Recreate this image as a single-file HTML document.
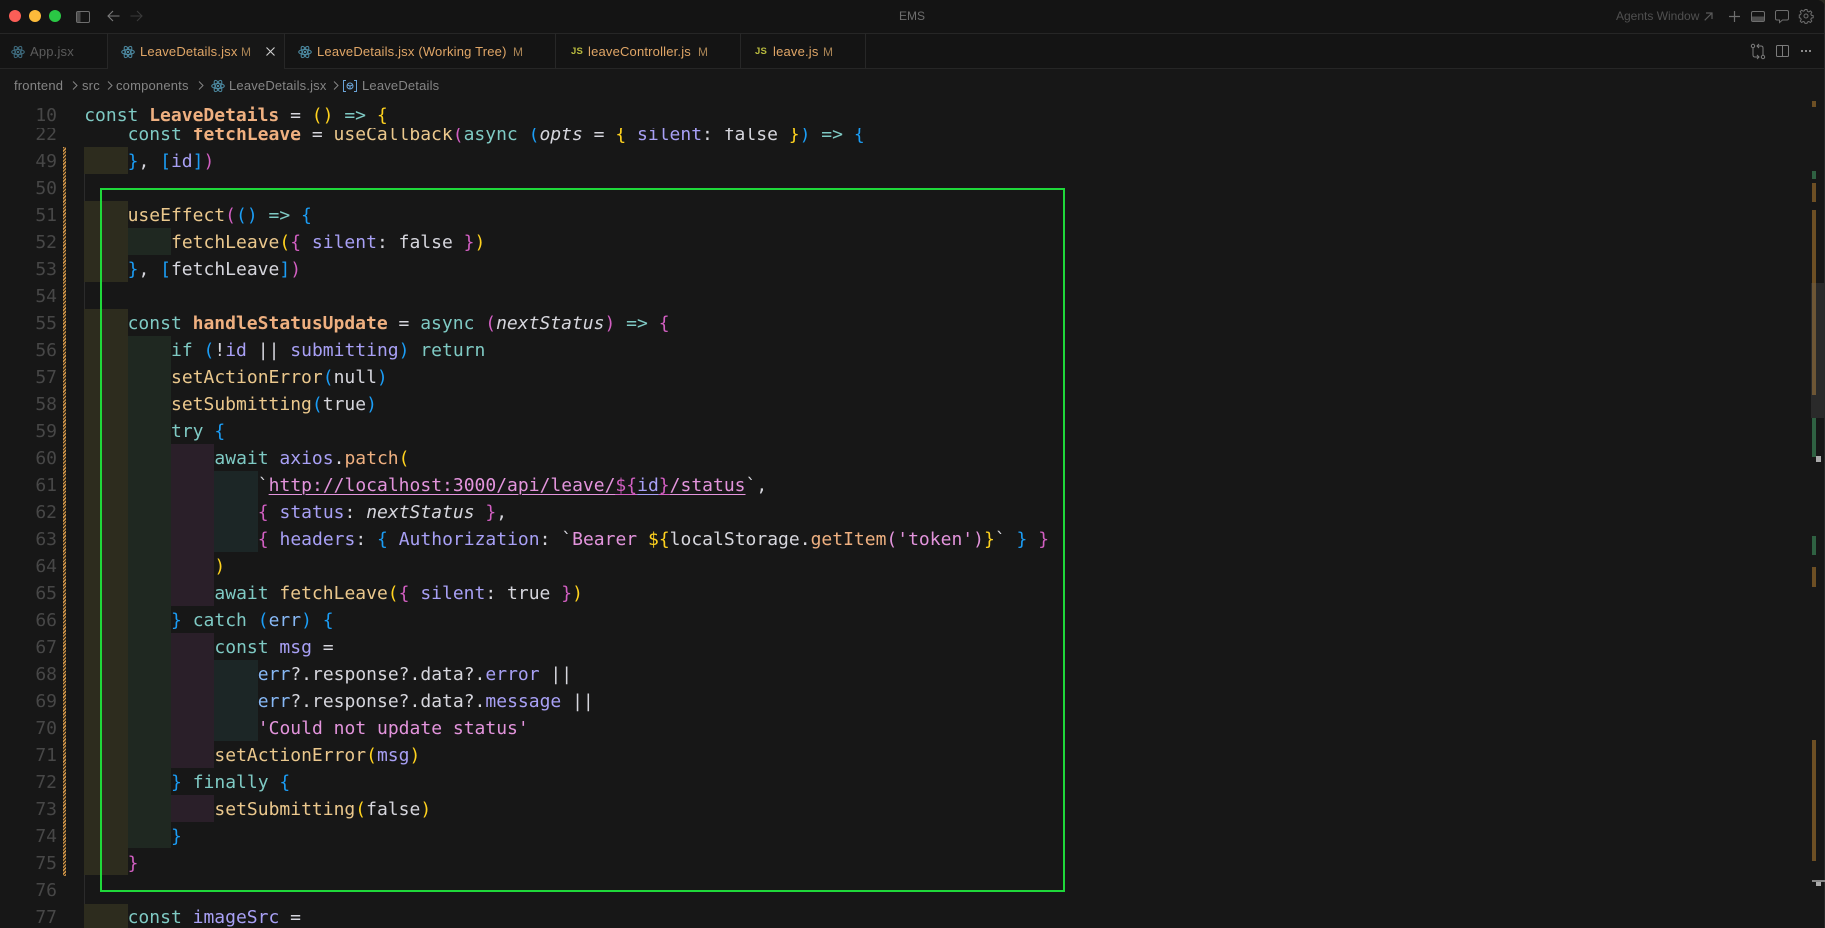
<!DOCTYPE html>
<html><head><meta charset="utf-8"><title>EMS</title>
<style>
html,body{margin:0;padding:0;background:#2a2a22;}
#w{position:relative;width:1825px;height:928px;overflow:hidden;background:#171717;border-radius:0 8px 0 0;font-family:"Liberation Sans",sans-serif;}
.a{position:absolute;}
.t{position:absolute;font-size:13px;line-height:18px;white-space:pre;letter-spacing:.18px}
.o{color:#e0a667}.m{color:#a98455}
.b{color:#858585}
.sep{position:absolute;width:1px;top:33px;height:35px;background:#272727;}
.ind{position:absolute;height:27px;}
.l1{background:#2d2c1e;left:84px;width:44px}
.l2{background:#1f2821;left:128px;width:43px}
.l3{background:#2a1f29;left:171px;width:43px}
.l4{background:#1c2626;left:214px;width:44px}
.n{position:absolute;left:0;width:57px;margin-top:1px;text-align:right;color:#474747;font:18px/27px "DejaVu Sans Mono",monospace;}
.c{position:absolute;margin-top:1px;white-space:pre;color:#d6d6dd;font:18px/27px "DejaVu Sans Mono",monospace;}
.k{color:#7fcac4}.f{color:#efb080;font-weight:bold}.g{color:#ebc88d}.p{color:#efb080}.v{color:#a8a0f5}
.s{color:#e394dc}.y{color:#ffd21e}.q{color:#d25fc2}.u{color:#1b9df5}.e{color:#87b8f5}.i{font-style:italic}
.ul{text-decoration:underline;text-underline-offset:3px;text-decoration-thickness:1px}
.mk{position:absolute;left:1812px;width:4px}
svg{position:absolute;overflow:visible}
</style></head><body><div id="w">
<div class="a" style="left:0;top:0;width:1825px;height:68px;background:#141414"></div>
<div class="a" style="left:0;top:33px;width:1825px;height:1px;background:#262626"></div>
<div class="a" style="left:0;top:68px;width:1825px;height:1px;background:#262626"></div>
<div class="a" style="left:108px;top:34px;width:176px;height:35px;background:#171717"></div>

<div class="a" style="left:9px;top:10px;width:12px;height:12px;border-radius:50%;background:#fb5e57"></div>
<div class="a" style="left:29px;top:10px;width:12px;height:12px;border-radius:50%;background:#fdbb3a"></div>
<div class="a" style="left:49px;top:10px;width:12px;height:12px;border-radius:50%;background:#2ac845"></div>
<svg style="left:76px;top:11px" width="14" height="12" viewBox="0 0 14 12" fill="none" stroke="#6e6e6e"><rect x=".5" y=".5" width="13" height="11" rx="1.5"/><rect x="1" y="1" width="3.5" height="10" fill="#4a4a4a" stroke="none"/></svg>
<svg style="left:107px;top:10px" width="13" height="12" viewBox="0 0 13 12" fill="none" stroke="#7a7a7a" stroke-width="1.1"><path d="M12.5 6H1M6 1 1 6l5 5"/></svg>
<svg style="left:130px;top:10px" width="13" height="12" viewBox="0 0 13 12" fill="none" stroke="#3a3a3a" stroke-width="1.1"><path d="M.5 6H12M7 1l5 5-5 5"/></svg>
<div class="t" style="left:899px;top:7px;font-size:12px;color:#6e6e6e;letter-spacing:0">EMS</div>
<div class="t" style="left:1616px;top:7px;font-size:12px;color:#505050;letter-spacing:0">Agents Window</div>
<svg style="left:1704px;top:12px" width="9" height="9" viewBox="0 0 9 9" fill="none" stroke="#5a5a5a" stroke-width="1.2"><path d="M.7 8.3 8 1M2 1h6v6"/></svg>
<svg style="left:1729px;top:11px" width="11" height="11" viewBox="0 0 11 11" fill="none" stroke="#6e6e6e" stroke-width="1.2"><path d="M5.5 0v11M0 5.5h11"/></svg>
<svg style="left:1751px;top:11px" width="14" height="11" viewBox="0 0 14 11" fill="none" stroke="#6e6e6e"><rect x=".5" y=".5" width="13" height="10" rx="1.5"/><rect x="1" y="5.5" width="12" height="4.5" fill="#4e4e4e" stroke="none"/></svg>
<svg style="left:1775px;top:10px" width="14" height="13" viewBox="0 0 14 13" fill="none" stroke="#6e6e6e"><path d="M2 .5h10A1.5 1.5 0 0 1 13.500 2v6.500A1.500 1.500 0 0 1 12 10H7.500L4.500 12.500V10H2A1.500 1.500 0 0 1 .5 8.500V2A1.500 1.500 0 0 1 2 .5z"/></svg>
<svg style="left:1799px;top:9px" width="14" height="14" viewBox="0 0 14 14" fill="none" stroke="#6e6e6e"><circle cx="7" cy="7" r="2"/><path d="M6 .5h2l.4 1.800 1.400.6 1.600-1 1.400 1.400-1 1.600.6 1.400 1.800.4v2l-1.800.4-.6 1.400 1 1.600-1.400 1.400-1.600-1-1.400.6-.4 1.300H6l-.4-1.300-1.400-.6-1.600 1-1.400-1.400 1-1.600-.6-1.400-1.300-.4V6l1.300-.4.6-1.400-1-1.600 1.400-1.400 1.600 1 1.400-.6z"/></svg>

<div class="sep" style="left:107px"></div><div class="sep" style="left:284px"></div><div class="sep" style="left:555px"></div><div class="sep" style="left:740px"></div><div class="sep" style="left:865px"></div>

<svg width="0" height="0" style="left:0;top:0"><defs><g id="r" fill="none"><ellipse cx="7" cy="7" rx="6.300" ry="2.500"/><ellipse cx="7" cy="7" rx="6.300" ry="2.500" transform="rotate(60 7 7)"/><ellipse cx="7" cy="7" rx="6.300" ry="2.500" transform="rotate(120 7 7)"/><circle cx="7" cy="7" r="1.200" fill="currentColor" stroke="none"/></g></defs></svg>
<svg style="left:11px;top:45px;color:#3f6d80" width="14" height="14" stroke="#3f6d80"><use href="#r"/></svg>
<div class="t" style="left:30px;top:43px;color:#5c5c5c">App.jsx</div>
<svg style="left:121px;top:45px;color:#4d8ba3" width="14" height="14" stroke="#4d8ba3"><use href="#r"/></svg>
<div class="t o" style="left:140px;top:43px">LeaveDetails.jsx</div>
<div class="t m" style="left:241px;top:43px;font-size:12px">M</div>
<svg style="left:266px;top:47px" width="9" height="9" viewBox="0 0 9 9" stroke="#d0d0d0" stroke-width="1.100"><path d="M.5.5l8 8M8.500.5l-8 8"/></svg>
<svg style="left:298px;top:45px;color:#4d8ba3" width="14" height="14" stroke="#4d8ba3"><use href="#r"/></svg>
<div class="t o" style="left:317px;top:43px">LeaveDetails.jsx (Working Tree)</div>
<div class="t m" style="left:513px;top:43px;font-size:12px">M</div>
<div class="t" style="left:571px;top:45px;color:#b8ba3e;font:bold 9.500px/14px 'Liberation Sans',sans-serif">JS</div>
<div class="t o" style="left:588px;top:43px">leaveController.js</div>
<div class="t m" style="left:698px;top:43px;font-size:12px">M</div>
<div class="t" style="left:755px;top:45px;color:#b8ba3e;font:bold 9.500px/14px 'Liberation Sans',sans-serif">JS</div>
<div class="t o" style="left:773px;top:43px">leave.js</div>
<div class="t m" style="left:823px;top:43px;font-size:12px">M</div>

<svg style="left:1751px;top:44px" width="14" height="15" viewBox="0 0 14 15" fill="none" stroke="#7c7c7c"><circle cx="2" cy="2" r="1.700"/><circle cx="12" cy="13" r="1.700"/><path d="M2 3.700V11q0 2 2 2h4M6 11l2 2-2 2M12 11.300V4q0-2-2-2H6M8 0 6 2l2 2"/></svg>
<svg style="left:1776px;top:45px" width="13" height="12" viewBox="0 0 13 12" fill="none" stroke="#7c7c7c"><rect x=".5" y=".5" width="12" height="11" rx="1"/><path d="M6.500.5v11"/></svg>
<div class="a" style="left:1801px;top:50px;width:2px;height:2px;background:#8a8a8a;box-shadow:4px 0 #8a8a8a,8px 0 #8a8a8a"></div>

<div class="t b" style="left:14px;top:77px">frontend</div>
<svg style="left:72px;top:81px" width="6" height="9" viewBox="0 0 6 9" fill="none" stroke="#858585"><path d="M1 .5l4 4-4 4"/></svg>
<div class="t b" style="left:82px;top:77px">src</div>
<svg style="left:107px;top:81px" width="6" height="9" viewBox="0 0 6 9" fill="none" stroke="#858585"><path d="M1 .5l4 4-4 4"/></svg>
<div class="t b" style="left:116px;top:77px">components</div>
<svg style="left:198px;top:81px" width="6" height="9" viewBox="0 0 6 9" fill="none" stroke="#858585"><path d="M1 .5l4 4-4 4"/></svg>
<svg style="left:211px;top:79px;color:#4d8ba3" width="14" height="14" stroke="#4d8ba3"><use href="#r"/></svg>
<div class="t b" style="left:229px;top:77px">LeaveDetails.jsx</div>
<svg style="left:333px;top:81px" width="6" height="9" viewBox="0 0 6 9" fill="none" stroke="#858585"><path d="M1 .5l4 4-4 4"/></svg>
<svg style="left:343px;top:80px" width="14" height="12" viewBox="0 0 14 12" fill="none" stroke="#6ba4d8"><path d="M3 .5H.5v11H3M11 .5h2.500v11H11"/><circle cx="7" cy="6" r="3"/><path d="M4.500 5l2.500 1 2.500-1M7 6v3"/></svg>
<div class="t b" style="left:362px;top:77px">LeaveDetails</div>

<!-- indent bands -->
<div class="ind l1" style="top:147px"></div>
<div class="ind l1" style="top:201px;height:81px"></div>
<div class="ind l1" style="top:309px;height:566px"></div>
<div class="ind l1" style="top:904px"></div>
<div class="ind l2" style="top:228px"></div>
<div class="ind l2" style="top:336px;height:512px"></div>
<div class="ind l3" style="top:444px;height:162px"></div>
<div class="ind l3" style="top:633px;height:135px"></div>
<div class="ind l3" style="top:795px"></div>
<div class="ind l4" style="top:471px;height:81px"></div>
<div class="ind l4" style="top:660px;height:81px"></div>
<div class="a" style="left:84px;top:174px;width:1px;height:27px;background:#2b2b2b"></div>
<div class="a" style="left:84px;top:282px;width:1px;height:27px;background:#2b2b2b"></div>
<div class="a" style="left:84px;top:875px;width:1px;height:29px;background:#2b2b2b"></div>

<div class="a" style="left:63px;top:147px;width:3px;height:729px;background:repeating-linear-gradient(135deg,#d99a4a 0 1.200px,#3a2e1c 1.200px 2.400px)"></div>

<div class="n" style="top:120px">22</div>
<div class="c" style="left:127.600px;top:120px"><span class="k">const</span> <span class="f">fetchLeave</span> = <span class="g">useCallback</span><span class="q">(</span><span class="k">async</span> <span class="u">(</span><span class="i">opts</span> = <span class="y">{</span> <span class="v">silent</span>: false <span class="y">}</span><span class="u">)</span> <span class="k">=&gt;</span> <span class="u">{</span></div>
<div class="a" style="left:0;top:101px;width:1780px;height:27px;background:#171717"></div>
<div class="n" style="top:101px">10</div>
<div class="c" style="left:84.200px;top:101px"><span class="k">const</span> <span class="f">LeaveDetails</span> = <span class="y">()</span> <span class="k">=&gt;</span> <span class="y">{</span></div>

<div class="n" style="top:147px">49</div><div class="c" style="left:127.600px;top:147px"><span class="u">}</span>, <span class="u">[</span><span class="v">id</span><span class="u">]</span><span class="q">)</span></div>
<div class="n" style="top:174px">50</div>
<div class="n" style="top:201px">51</div><div class="c" style="left:127.600px;top:201px"><span class="g">useEffect</span><span class="q">(</span><span class="u">()</span> <span class="k">=&gt;</span> <span class="u">{</span></div>
<div class="n" style="top:228px">52</div><div class="c" style="left:171px;top:228px"><span class="g">fetchLeave</span><span class="y">(</span><span class="q">{</span> <span class="v">silent</span>: false <span class="q">}</span><span class="y">)</span></div>
<div class="n" style="top:255px">53</div><div class="c" style="left:127.600px;top:255px"><span class="u">}</span>, <span class="u">[</span>fetchLeave<span class="u">]</span><span class="q">)</span></div>
<div class="n" style="top:282px">54</div>
<div class="n" style="top:309px">55</div><div class="c" style="left:127.600px;top:309px"><span class="k">const</span> <span class="f">handleStatusUpdate</span> = <span class="k">async</span> <span class="q">(</span><span class="i">nextStatus</span><span class="q">)</span> <span class="k">=&gt;</span> <span class="q">{</span></div>
<div class="n" style="top:336px">56</div><div class="c" style="left:171px;top:336px"><span class="k">if</span> <span class="u">(</span>!<span class="v">id</span> || <span class="v">submitting</span><span class="u">)</span> <span class="k">return</span></div>
<div class="n" style="top:363px">57</div><div class="c" style="left:171px;top:363px"><span class="g">setActionError</span><span class="u">(</span>null<span class="u">)</span></div>
<div class="n" style="top:390px">58</div><div class="c" style="left:171px;top:390px"><span class="g">setSubmitting</span><span class="u">(</span>true<span class="u">)</span></div>
<div class="n" style="top:417px">59</div><div class="c" style="left:171px;top:417px"><span class="k">try</span> <span class="u">{</span></div>
<div class="n" style="top:444px">60</div><div class="c" style="left:214.400px;top:444px"><span class="k">await</span> <span class="v">axios</span>.<span class="p">patch</span><span class="y">(</span></div>
<div class="n" style="top:471px">61</div><div class="c" style="left:257.800px;top:471px">`<span class="s ul">http://localhost:3000/api/leave/</span><span class="q ul">${</span><span class="v ul">id</span><span class="q ul">}</span><span class="s ul">/status</span>`,</div>
<div class="n" style="top:498px">62</div><div class="c" style="left:257.800px;top:498px"><span class="q">{</span> <span class="v">status</span>: <span class="i">nextStatus</span> <span class="q">}</span>,</div>
<div class="n" style="top:525px">63</div><div class="c" style="left:257.800px;top:525px"><span class="q">{</span> <span class="v">headers</span>: <span class="u">{</span> <span class="v">Authorization</span>: `<span class="s">Bearer </span><span class="y">${</span>localStorage.<span class="p">getItem</span><span class="s">('token')</span><span class="y">}</span>` <span class="u">}</span> <span class="q">}</span></div>
<div class="n" style="top:552px">64</div><div class="c" style="left:214.400px;top:552px"><span class="y">)</span></div>
<div class="n" style="top:579px">65</div><div class="c" style="left:214.400px;top:579px"><span class="k">await</span> <span class="g">fetchLeave</span><span class="y">(</span><span class="q">{</span> <span class="v">silent</span>: true <span class="q">}</span><span class="y">)</span></div>
<div class="n" style="top:606px">66</div><div class="c" style="left:171px;top:606px"><span class="u">}</span> <span class="k">catch</span> <span class="u">(</span><span class="e">err</span><span class="u">)</span> <span class="u">{</span></div>
<div class="n" style="top:633px">67</div><div class="c" style="left:214.400px;top:633px"><span class="k">const</span> <span class="v">msg</span> =</div>
<div class="n" style="top:660px">68</div><div class="c" style="left:257.800px;top:660px"><span class="e">err</span>?.response?.data?.<span class="v">error</span> ||</div>
<div class="n" style="top:687px">69</div><div class="c" style="left:257.800px;top:687px"><span class="e">err</span>?.response?.data?.<span class="v">message</span> ||</div>
<div class="n" style="top:714px">70</div><div class="c" style="left:257.800px;top:714px"><span class="s">'Could not update status'</span></div>
<div class="n" style="top:741px">71</div><div class="c" style="left:214.400px;top:741px"><span class="g">setActionError</span><span class="y">(</span><span class="v">msg</span><span class="y">)</span></div>
<div class="n" style="top:768px">72</div><div class="c" style="left:171px;top:768px"><span class="u">}</span> <span class="k">finally</span> <span class="u">{</span></div>
<div class="n" style="top:795px">73</div><div class="c" style="left:214.400px;top:795px"><span class="g">setSubmitting</span><span class="y">(</span>false<span class="y">)</span></div>
<div class="n" style="top:822px">74</div><div class="c" style="left:171px;top:822px"><span class="u">}</span></div>
<div class="n" style="top:849px">75</div><div class="c" style="left:127.600px;top:849px"><span class="q">}</span></div>
<div class="n" style="top:876px">76</div>
<div class="n" style="top:903px">77</div><div class="c" style="left:127.600px;top:903px"><span class="k">const</span> <span class="v">imageSrc</span> =</div>

<div class="a" style="left:100px;top:188px;width:961px;height:700px;border:2px solid #1fd83a"></div>

<!-- overview ruler -->
<div class="a" style="left:1811px;top:283px;width:14px;height:135px;background:#2a2a2a"></div>
<div class="a" style="left:1824px;top:0;width:1px;height:928px;background:#2a2a2a"></div>
<div class="mk" style="top:101px;height:6px;background:#6d4f24"></div>
<div class="mk" style="top:171px;height:8px;background:#2f6142"></div>
<div class="mk" style="top:183px;height:19px;background:#6d4f24"></div>
<div class="mk" style="top:210px;height:73px;background:#6d4f24"></div>
<div class="mk" style="top:283px;height:112px;background:#6d5635"></div>
<div class="mk" style="top:418px;height:39px;background:#2f6142"></div>
<div class="a" style="left:1816px;top:456px;width:5px;height:6px;background:#aaa"></div>
<div class="mk" style="top:536px;height:19px;background:#2f6142"></div>
<div class="mk" style="top:567px;height:20px;background:#6d4f24"></div>
<div class="mk" style="top:740px;height:121px;background:#6d4f24"></div>
<div class="a" style="left:1812px;top:880px;width:13px;height:2px;background:#888"></div>
<div class="a" style="left:1816px;top:882px;width:5px;height:4px;background:#aaa"></div>
</div></body></html>
